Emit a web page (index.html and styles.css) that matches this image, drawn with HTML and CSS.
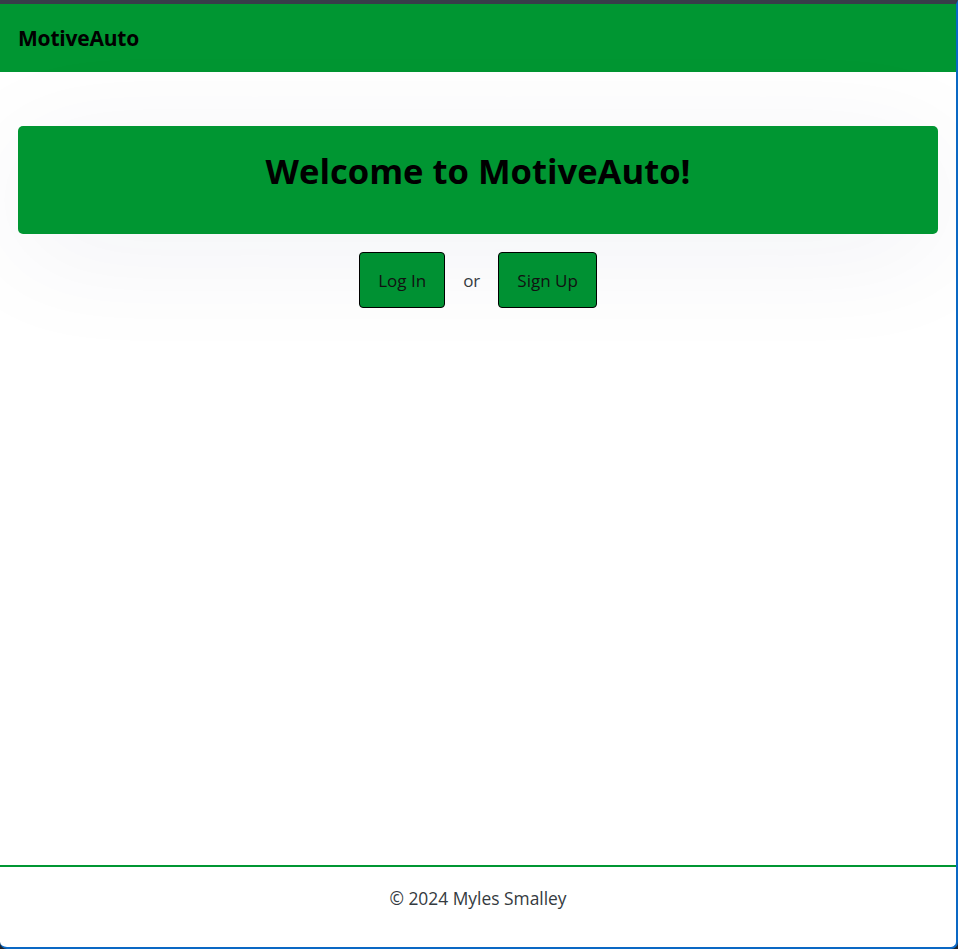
FILE: index.html
```html
<!DOCTYPE html>
<html lang="en">
<head>
<meta charset="utf-8">
<title>MotiveAuto</title>
<link rel="stylesheet" href="styles.css">
</head>
<body>
<div class="window">
  <header class="navbar">
    <span class="brand">MotiveAuto</span>
  </header>
  <main class="main">
    <section class="hero">
      <h1 class="hero-title">Welcome to MotiveAuto!</h1>
    </section>
    <div class="actions">
      <a class="btn" href="#">Log In</a>
      <span class="or">or</span>
      <a class="btn" href="#">Sign Up</a>
    </div>
  </main>
  <footer class="footer">
    <p class="copy">© 2024 Myles Smalley</p>
  </footer>
</div>
</body>
</html>
```

FILE: styles.css
```css
html {
  background: #20242b;
  height: 100%;
}
body {
  margin: 0;
  height: 100%;
  font-family: "Open Sans", "Noto Sans", sans-serif;
  color: #212529;
}
.window {
  box-sizing: border-box;
  height: 100%;
  display: flex;
  flex-direction: column;
  background: #ffffff;
  border-top: 4px solid #373d49;
  border-right: 2px solid #0a68c4;
  border-bottom: 2px solid #0a68c4;
  border-bottom-left-radius: 7px;
  border-bottom-right-radius: 7px;
  overflow: hidden;
}
.navbar {
  height: 68px;
  background: #009632;
  display: flex;
  align-items: center;
  padding: 0 18px;
  flex-shrink: 0;
}
.brand {
  font-weight: 700;
  font-size: 21px;
  color: #000;
  letter-spacing: -0.2px;
}
.main {
  flex: 1;
  padding: 54px 18px 0;
}
.hero {
  background: #009632;
  border-radius: 5px;
  height: 108px;
  display: flex;
  align-items: center;
  justify-content: center;
  box-shadow: 0 20px 120px rgba(20, 30, 80, 0.06);
}
.hero-title {
  margin: 0;
  font-size: 34.6px;
  font-weight: 700;
  color: #000;
  position: relative;
  top: -10px;
}
.actions {
  margin-top: 18px;
  display: flex;
  justify-content: center;
  align-items: center;
  gap: 18px;
}
.btn {
  box-sizing: border-box;
  height: 56px;
  display: flex;
  align-items: center;
  padding: 0 18px;
  background: #009133;
  border: 1px solid #000;
  border-radius: 4px;
  color: #111;
  text-decoration: none;
  font-size: 17px;
}
.or {
  font-size: 17px;
  color: #343a40;
}
.footer {
  flex-shrink: 0;
  height: 80px;
  border-top: 2px solid #009632;
  display: flex;
  align-items: center;
  justify-content: center;
}
.copy {
  margin: 0;
  font-size: 17.4px;
  color: #343a40;
  position: relative;
  top: -9px;
}
```
